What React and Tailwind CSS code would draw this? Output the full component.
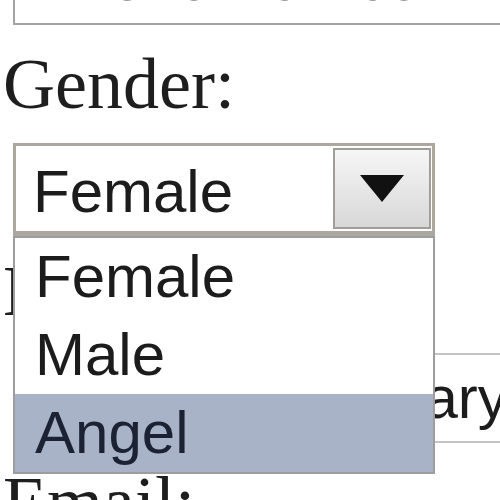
export default function App() {
  const options = ['Female', 'Male', 'Angel'];
  const selected = 'Angel';

  return (
    <div className="w-[500px] h-[500px] overflow-hidden bg-white text-[#1e1e1e]">
      {/* field above, mostly scrolled off */}
      <div className="-mt-[50px] ml-[13px] w-[600px] h-[75px] border-2 border-[#a3a3a3] pl-[22px] font-['Liberation_Sans',Arial,sans-serif] text-[60px] leading-[56px] text-[#2a2a2a] whitespace-nowrap overflow-hidden">
        Phone Number
      </div>

      <div className="mt-[23px] pl-[3px] h-[72px] font-['Liberation_Serif','Times_New_Roman',serif] text-[72px] leading-[72px] whitespace-nowrap">
        Gender:
      </div>

      <div className="relative mt-[23px] ml-[13px] w-[422px] font-['Liberation_Sans',Arial,sans-serif] text-[60px]">
        <div className="flex h-[93px] border-[3px] border-b-[5px] border-[#aca89f] bg-white">
          <div className="flex-1 pl-[17px] pt-[6px] leading-[79px] text-[#1c1c1c]">Female</div>
          <div className="my-[2px] mr-[1px] w-[98px] flex items-center justify-center border-2 border-[#a19d97] bg-gradient-to-b from-[#f6f6f6] to-[#d8d8d8]">
            <svg width="44" height="27" viewBox="0 0 44 27">
              <polygon points="0,0 44,0 22,27" fill="#111" />
            </svg>
          </div>
        </div>

        <ul className="absolute left-0 top-full z-10 w-full border-2 border-[#9d9d9d] bg-white">
          {options.map((o) => (
            <li
              key={o}
              className={`h-[78px] pl-[20px] leading-[78px] ${
                o === selected ? 'bg-[#a9b3c7] text-[#1b2233]' : 'text-[#1c1c1c]'
              }`}
            >
              {o}
            </li>
          ))}
        </ul>
      </div>

      <div className="mt-[19px] pl-[3px] h-[72px] font-['Liberation_Serif','Times_New_Roman',serif] text-[72px] leading-[72px] whitespace-nowrap">
        Designation:
      </div>

      <div className="mt-[26px] ml-[13px] w-[600px] h-[90px] border-2 border-[#c4c4c4] pl-[236px] font-['Liberation_Sans',Arial,sans-serif] text-[60px] leading-[86px] text-[#1c1c1c] whitespace-nowrap">
        Secretary
      </div>

      <div className="mt-[23px] pl-[3px] h-[72px] font-['Liberation_Serif','Times_New_Roman',serif] text-[72px] leading-[72px] whitespace-nowrap">
        Email:
      </div>
    </div>
  );
}
